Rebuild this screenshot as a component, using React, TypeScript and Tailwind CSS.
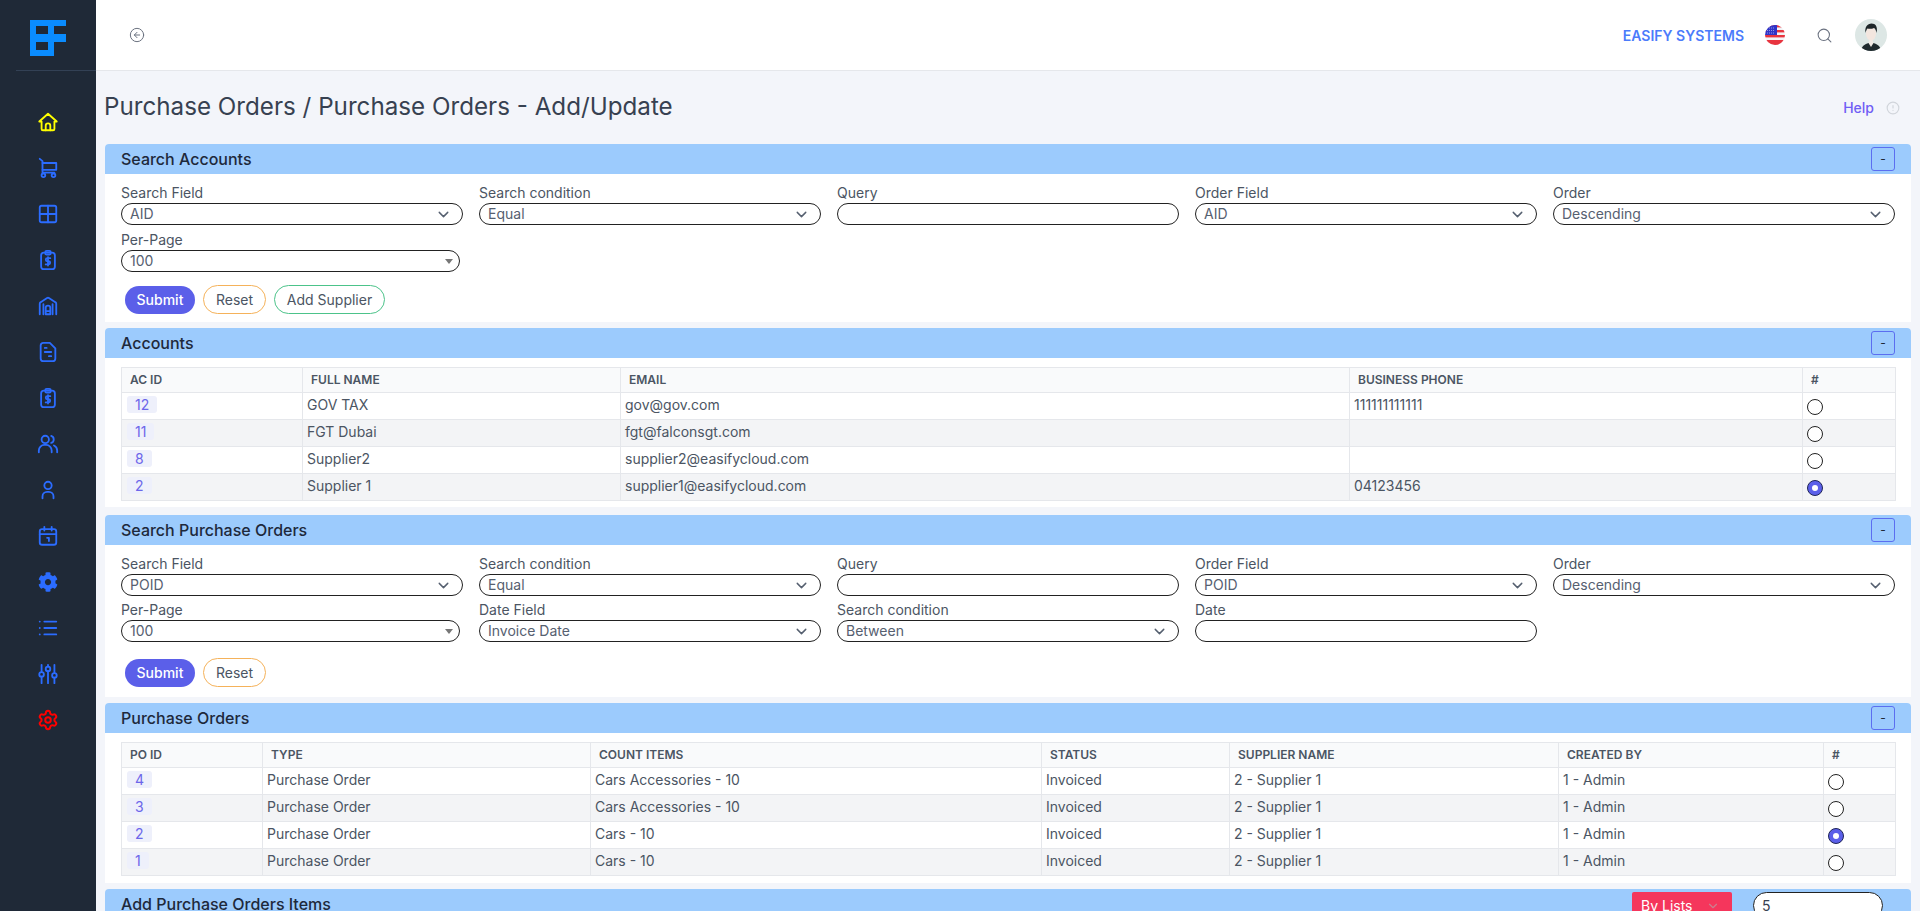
import { ChevronDown, CircleAlert, CircleArrowLeft, Grid2x2, List, Search, Settings } from 'lucide-react';
import { FaCog } from 'react-icons/fa';
import type { ReactNode } from 'react';

const iconProps = {
  width: 22,
  height: 22,
  viewBox: '0 0 24 24',
  fill: 'none',
  stroke: 'currentColor',
  strokeWidth: 2,
  strokeLinecap: 'round' as const,
  strokeLinejoin: 'round' as const,
};

function Logo() {
  return (
    <svg width="36" height="36" viewBox="0 0 36 36">
      <path
        fill="#0a8cff"
        fillRule="evenodd"
        d="M0 0H36V6H24V14H36V22H24V36H0ZM6 6V14H18V6ZM6 22V30H18V22Z"
      />
    </svg>
  );
}

function HomeIcon() {
  return (
    <svg {...iconProps}>
      <path d="M2.5 11.5 12 3l9.5 8.5H19v8a1.5 1.5 0 0 1-1.5 1.5h-11A1.5 1.5 0 0 1 5 19.5v-8Z" />
      <path d="M9.5 21v-5a2.5 2.5 0 0 1 5 0v5" />
    </svg>
  );
}

function CartIcon() {
  return (
    <svg {...iconProps}>
      <path d="M3 2l3 2.5V17h13" />
      <path d="M6 6.500h15V14H6" />
      <circle cx="7" cy="20" r="2" />
      <circle cx="18" cy="20" r="2" />
    </svg>
  );
}

function ClipboardDollarIcon() {
  return (
    <svg {...iconProps}>
      <rect x="4.500" y="4" width="15" height="18" rx="3" />
      <rect x="9" y="2" width="6" height="4" rx="1.500" />
      <path d="M14.500 10h-3.200a1.700 1.700 0 0 0 0 3.400h1.400a1.700 1.700 0 0 1 0 3.400H9.500M12 8.800v9.200" />
    </svg>
  );
}

function WarehouseIcon() {
  return (
    <svg {...iconProps}>
      <path d="M3 21V9.500a2 2 0 0 1 1-1.700l7-4.500a2 2 0 0 1 2 0l7 4.500a2 2 0 0 1 1 1.700V21" />
      <path d="M7 21V10M17 21V10" />
      <path d="M9.500 21v-7a2.500 2.500 0 0 1 5 0v7ZM9.500 17.500h5" />
    </svg>
  );
}

function FileLinesIcon() {
  return (
    <svg {...iconProps}>
      <path d="M14 2H7a3 3 0 0 0-3 3v14a3 3 0 0 0 3 3h10a3 3 0 0 0 3-3V8Z" />
      <path d="M8.500 7.500h2M8.500 12h7M13 16.500h2.500" />
    </svg>
  );
}

function UsersIcon() {
  return (
    <svg {...iconProps}>
      <circle cx="9" cy="7" r="4" />
      <path d="M2 21v-2a6 6 0 0 1 6-6h2a6 6 0 0 1 6 6v2" />
      <path d="M15.500 3.200a4 4 0 0 1 0 7.600M22 21v-2a6 6 0 0 0-3.500-5.400" />
    </svg>
  );
}

function UserIcon() {
  return (
    <svg {...iconProps}>
      <circle cx="12" cy="7" r="4" />
      <path d="M6 21v-2a5 5 0 0 1 5-5h2a5 5 0 0 1 5 5v2" />
    </svg>
  );
}

function CalendarIcon() {
  return (
    <svg {...iconProps}>
      <rect x="3" y="4.500" width="18" height="17" rx="2.500" />
      <path d="M8 2v4M16 2v4M3 10h18" />
      <path d="M11 14h2v3.500" />
    </svg>
  );
}

function SlidersIcon() {
  return (
    <svg {...iconProps}>
      <path d="M5 2v8M5 15v7M12 2v2M12 9v13M19 2v9M19 16v6" />
      <circle cx="5" cy="12.500" r="2.500" />
      <circle cx="12" cy="6.500" r="2.500" />
      <circle cx="19" cy="13.500" r="2.500" />
    </svg>
  );
}

function Flag() {
  return (
    <svg width="20" height="20" viewBox="0 0 20 20">
      <defs>
        <clipPath id="flag-clip">
          <circle cx="10" cy="10" r="10" />
        </clipPath>
      </defs>
      <g clipPath="url(#flag-clip)">
        <rect width="20" height="20" fill="#f3f4f6" />
        <rect y="5" width="20" height="2.400" fill="#e8343f" />
        <rect y="10" width="20" height="2.400" fill="#e8343f" />
        <rect y="15" width="20" height="5" fill="#e8343f" />
        <rect width="20" height="2.400" fill="#e8343f" />
        <rect width="12" height="10" fill="#2f34c8" />
        <path d="M2 3h8M2 5.500h8M2 8h8" stroke="#aab0ee" strokeWidth="0.800" strokeDasharray="1 1" />
      </g>
    </svg>
  );
}

function Avatar() {
  return (
    <svg width="32" height="32" viewBox="0 0 32 32">
      <defs>
        <clipPath id="avatar-clip">
          <circle cx="16" cy="16" r="16" />
        </clipPath>
      </defs>
      <g clipPath="url(#avatar-clip)">
        <rect width="32" height="32" fill="#dde7e5" />
        <path d="M6 32c.5-5 4-7 7.500-8h5c3.500 1 7 3 7.500 8Z" fill="#1f2a2e" />
        <path d="M13.500 24l2.500 4 2.500-4-1-3h-3Z" fill="#f1ebe6" />
        <ellipse cx="16" cy="14.500" rx="5" ry="7" fill="#f3e6df" />
        <path d="M10.500 14c-1-6 2-9.500 6-9.500s6.500 3 5 9.500c-.5-2.500-1-4-2.500-5-2 1-5 1-6.500.5-1 1-1.500 2.500-2 4.500Z" fill="#1d2528" />
      </g>
    </svg>
  );
}

const navItems = [
  { icon: <HomeIcon />, color: 'text-[#ffff00]' },
  { icon: <CartIcon />, color: 'text-[#2b6cff]' },
  { icon: <Grid2x2 size={22} />, color: 'text-[#2b6cff]' },
  { icon: <ClipboardDollarIcon />, color: 'text-[#2b6cff]' },
  { icon: <WarehouseIcon />, color: 'text-[#2b6cff]' },
  { icon: <FileLinesIcon />, color: 'text-[#2b6cff]' },
  { icon: <ClipboardDollarIcon />, color: 'text-[#2b6cff]' },
  { icon: <UsersIcon />, color: 'text-[#2b6cff]' },
  { icon: <UserIcon />, color: 'text-[#2b6cff]' },
  { icon: <CalendarIcon />, color: 'text-[#2b6cff]' },
  { icon: <FaCog size={20} />, color: 'text-[#2b6cff]' },
  { icon: <List size={22} />, color: 'text-[#2b6cff]' },
  { icon: <SlidersIcon />, color: 'text-[#2b6cff]' },
  { icon: <Settings size={22} strokeWidth={2.2} />, color: 'text-[#ff0000]' },
];

function Sidebar() {
  return (
    <aside className="w-[96px] shrink-0 bg-[#1f2937]">
      <div className="ml-[16px] flex h-[71px] items-center border-b border-[#334155] pl-[14px] pt-[5px]">
        <Logo />
      </div>
      <nav className="flex flex-col items-center pt-[28px]">
        {navItems.map((item, i) => (
          <div key={i} className={`flex h-[46px] w-full items-center justify-center ${item.color}`}>
            {item.icon}
          </div>
        ))}
      </nav>
    </aside>
  );
}

function Topbar() {
  return (
    <header className="flex h-[71px] shrink-0 items-center justify-between border-b border-[#e5e7eb] bg-white pl-[33px] pr-[33px]">
      <CircleArrowLeft size={16} strokeWidth={1.5} className="text-[#6b7280]" />
      <div className="flex items-center">
        <span className="text-[14px] font-semibold text-[#4b7bfb]">EASIFY SYSTEMS</span>
        <span className="ml-[21px]">
          <Flag />
        </span>
        <Search size={17} strokeWidth={1.5} className="ml-[31px] text-[#6b7280]" />
        <span className="ml-[22px]">
          <Avatar />
        </span>
      </div>
    </header>
  );
}

function Panel({ title, className, children }: { title: string; className: string; children: ReactNode }) {
  return (
    <section className={`rounded-t-[4px] bg-white ${className}`}>
      <div className="flex h-[30px] items-center justify-between rounded-t-[4px] bg-[#9ccbfd] pl-[16px] pr-[16px]">
        <h2 className="text-[16px] font-medium text-[#1e293b]">{title}</h2>
        <button className="flex h-[24px] w-[24px] items-center justify-center rounded-[3px] border border-[#5b6ef0] text-[12px] text-[#1f2937]">
          -
        </button>
      </div>
      {children}
    </section>
  );
}

function Field({ label, value, native, className }: { label: string; value?: string; native?: boolean; className?: string }) {
  return (
    <label className={`block ${className ?? ''}`}>
      <span className="block h-[20px] text-[14px] leading-[20px] text-[#4b5563]">{label}</span>
      <span className="relative block">
        {value === undefined ? (
          <input
            type="text"
            className="block h-[22px] w-full rounded-full border border-[#222] bg-white px-[8px] text-[14px] text-[#4b5563]"
          />
        ) : (
          <select
            defaultValue={value}
            className="block h-[22px] w-full appearance-none rounded-full border border-[#222] bg-white py-0 pl-[8px] pr-[24px] text-[14px] leading-[20px] text-[#566070]"
          >
            <option>{value}</option>
          </select>
        )}
        {value !== undefined && !native && (
          <ChevronDown size={17} strokeWidth={2} className="pointer-events-none absolute right-[11px] top-[3px] text-[#566070]" />
        )}
        {native && (
          <span className="pointer-events-none absolute right-[7px] top-[9px] h-0 w-0 border-x-[4px] border-t-[5px] border-x-transparent border-t-[#777]" />
        )}
      </span>
    </label>
  );
}

function Buttons({ addSupplier, className }: { addSupplier?: boolean; className: string }) {
  return (
    <div className={`flex items-center pl-[4px] ${className}`}>
      <button className="h-[28px] w-[70px] rounded-full bg-[#5b5fe9] text-[14px] font-medium text-white">Submit</button>
      <button className="ml-[8px] h-[29px] w-[63px] rounded-full border border-[#f5b25a] text-[14px] text-[#4b5563]">Reset</button>
      {addSupplier && (
        <button className="ml-[8px] h-[29px] w-[111px] rounded-full border border-[#4cc38a] text-[14px] text-[#4b5563]">
          Add Supplier
        </button>
      )}
    </div>
  );
}

function IdBadge({ id }: { id: number }) {
  return (
    <span className="inline-block h-[17px] rounded-[3px] bg-[#eef0fb] px-[8px] text-[14px] leading-[17px] text-[#6c66ea]">{id}</span>
  );
}

function Radio({ checked }: { checked?: boolean }) {
  if (checked) {
    return (
      <span className="flex h-[16px] w-[16px] items-center justify-center rounded-full border border-[#1f2558] bg-[#5b5fe9]">
        <span className="h-[6px] w-[6px] rounded-full bg-white" />
      </span>
    );
  }
  return <span className="block h-[16px] w-[16px] rounded-full border border-[#222] bg-white" />;
}

function DataTable({
  widths,
  headers,
  rows,
  checkedIndex,
}: {
  widths: number[];
  headers: string[];
  rows: (string | number)[][];
  checkedIndex: number;
}) {
  return (
    <table className="w-full table-fixed border-collapse border border-[#e5e7eb] text-[14px] text-[#4b5563]">
      <colgroup>
        {widths.map((w, i) => (
          <col key={i} style={{ width: w }} />
        ))}
      </colgroup>
      <thead>
        <tr className="h-[25px] bg-[#f9fafb]">
          {headers.map((h) => (
            <th key={h} className="border-l border-[#e5e7eb] pl-[8px] text-left text-[12px] font-semibold text-[#4b5563]">
              {h}
            </th>
          ))}
        </tr>
      </thead>
      <tbody>
        {rows.map((row, r) => (
          <tr key={r} className={`h-[27px] border-t border-[#e5e7eb] ${r % 2 === 1 ? 'bg-[#f3f4f6]' : 'bg-white'}`}>
            {row.map((cell, c) => (
              <td key={c} className={`border-l border-[#e5e7eb] pb-[3px] pt-0 ${c === 0 ? 'pl-[5px]' : 'pl-[4px]'}`}>
                {c === 0 ? <IdBadge id={cell as number} /> : cell}
              </td>
            ))}
            <td className="border-l border-[#e5e7eb] pb-0 pl-[4px] pt-[2px]">
              <Radio checked={r === checkedIndex} />
            </td>
          </tr>
        ))}
      </tbody>
    </table>
  );
}

const accountRows = [
  [12, 'GOV TAX', 'gov@gov.com', '111111111111'],
  [11, 'FGT Dubai', 'fgt@falconsgt.com', ''],
  [8, 'Supplier2', 'supplier2@easifycloud.com', ''],
  [2, 'Supplier 1', 'supplier1@easifycloud.com', '04123456'],
];

const orderRows = [
  [4, 'Purchase Order', 'Cars Accessories - 10', 'Invoiced', '2 - Supplier 1', '1 - Admin'],
  [3, 'Purchase Order', 'Cars Accessories - 10', 'Invoiced', '2 - Supplier 1', '1 - Admin'],
  [2, 'Purchase Order', 'Cars - 10', 'Invoiced', '2 - Supplier 1', '1 - Admin'],
  [1, 'Purchase Order', 'Cars - 10', 'Invoiced', '2 - Supplier 1', '1 - Admin'],
];

export default function App() {
  return (
    <div className="flex h-screen overflow-hidden bg-[#f3f5fa] font-[Inter,sans-serif]">
      <Sidebar />
      <div className="flex min-w-0 flex-1 flex-col">
        <Topbar />
        <main className="px-[9px]">
          <div className="flex h-[73px] items-center justify-between">
            <h1 className="-ml-[1px] text-[24.2px] font-normal text-[#374151]">Purchase Orders / Purchase Orders - Add/Update</h1>
            <div className="flex items-center pr-[11px]">
              <span className="text-[14px] font-medium text-[#6f5ef5]">Help</span>
              <CircleAlert size={14} className="ml-[12px] text-[#d1d5db]" />
            </div>
          </div>

          <Panel title="Search Accounts" className="mb-[6px]">
            <div className="px-[16px] pb-[8px] pt-[9px]">
              <div className="grid grid-cols-5 gap-x-[16px] gap-y-[5px]">
                <Field label="Search Field" value="AID" />
                <Field label="Search condition" value="Equal" />
                <Field label="Query" />
                <Field label="Order Field" value="AID" />
                <Field label="Order" value="Descending" />
                <Field label="Per-Page" value="100" native className="pr-[3px]" />
              </div>
              <Buttons addSupplier className="mt-[13px]" />
            </div>
          </Panel>

          <Panel title="Accounts" className="mb-[8px]">
            <div className="px-[16px] pb-[6px] pt-[9px]">
              <DataTable
                widths={[181, 318, 729, 453, 93]}
                headers={['AC ID', 'FULL NAME', 'EMAIL', 'BUSINESS PHONE', '#']}
                rows={accountRows}
                checkedIndex={3}
              />
            </div>
          </Panel>

          <Panel title="Search Purchase Orders" className="mb-[6px]">
            <div className="px-[16px] pb-[10px] pt-[9px]">
              <div className="grid grid-cols-5 gap-x-[16px] gap-y-[4px]">
                <Field label="Search Field" value="POID" />
                <Field label="Search condition" value="Equal" />
                <Field label="Query" />
                <Field label="Order Field" value="POID" />
                <Field label="Order" value="Descending" />
                <Field label="Per-Page" value="100" native className="pr-[3px]" />
                <Field label="Date Field" value="Invoice Date" />
                <Field label="Search condition" value="Between" />
                <Field label="Date" />
              </div>
              <Buttons className="mt-[16px]" />
            </div>
          </Panel>

          <Panel title="Purchase Orders" className="mb-[6px]">
            <div className="px-[16px] pb-[7px] pt-[9px]">
              <DataTable
                widths={[141, 328, 451, 188, 329, 265, 72]}
                headers={['PO ID', 'TYPE', 'COUNT ITEMS', 'STATUS', 'SUPPLIER NAME', 'CREATED BY', '#']}
                rows={orderRows}
                checkedIndex={2}
              />
            </div>
          </Panel>

          <section className="rounded-t-[4px] bg-[#9ccbfd]">
            <div className="flex h-[30px] items-center pl-[16px] pr-[28px]">
              <h2 className="text-[16px] font-medium text-[#1e293b]">Add Purchase Orders Items</h2>
              <div className="ml-auto flex h-[27px] w-[100px] items-center justify-between self-end rounded-t-[2px] bg-[#f5365c] pl-[9px] pr-[12px] text-[14px] text-white">
                By Lists
                <ChevronDown size={14} className="text-[#c9808f]" />
              </div>
              <input
                type="text"
                defaultValue="5"
                className="ml-[21px] h-[27px] w-[130px] self-end rounded-full border border-[#222] bg-white px-[8px] text-[14px] text-[#374151]"
              />
            </div>
          </section>
        </main>
      </div>
    </div>
  );
}
